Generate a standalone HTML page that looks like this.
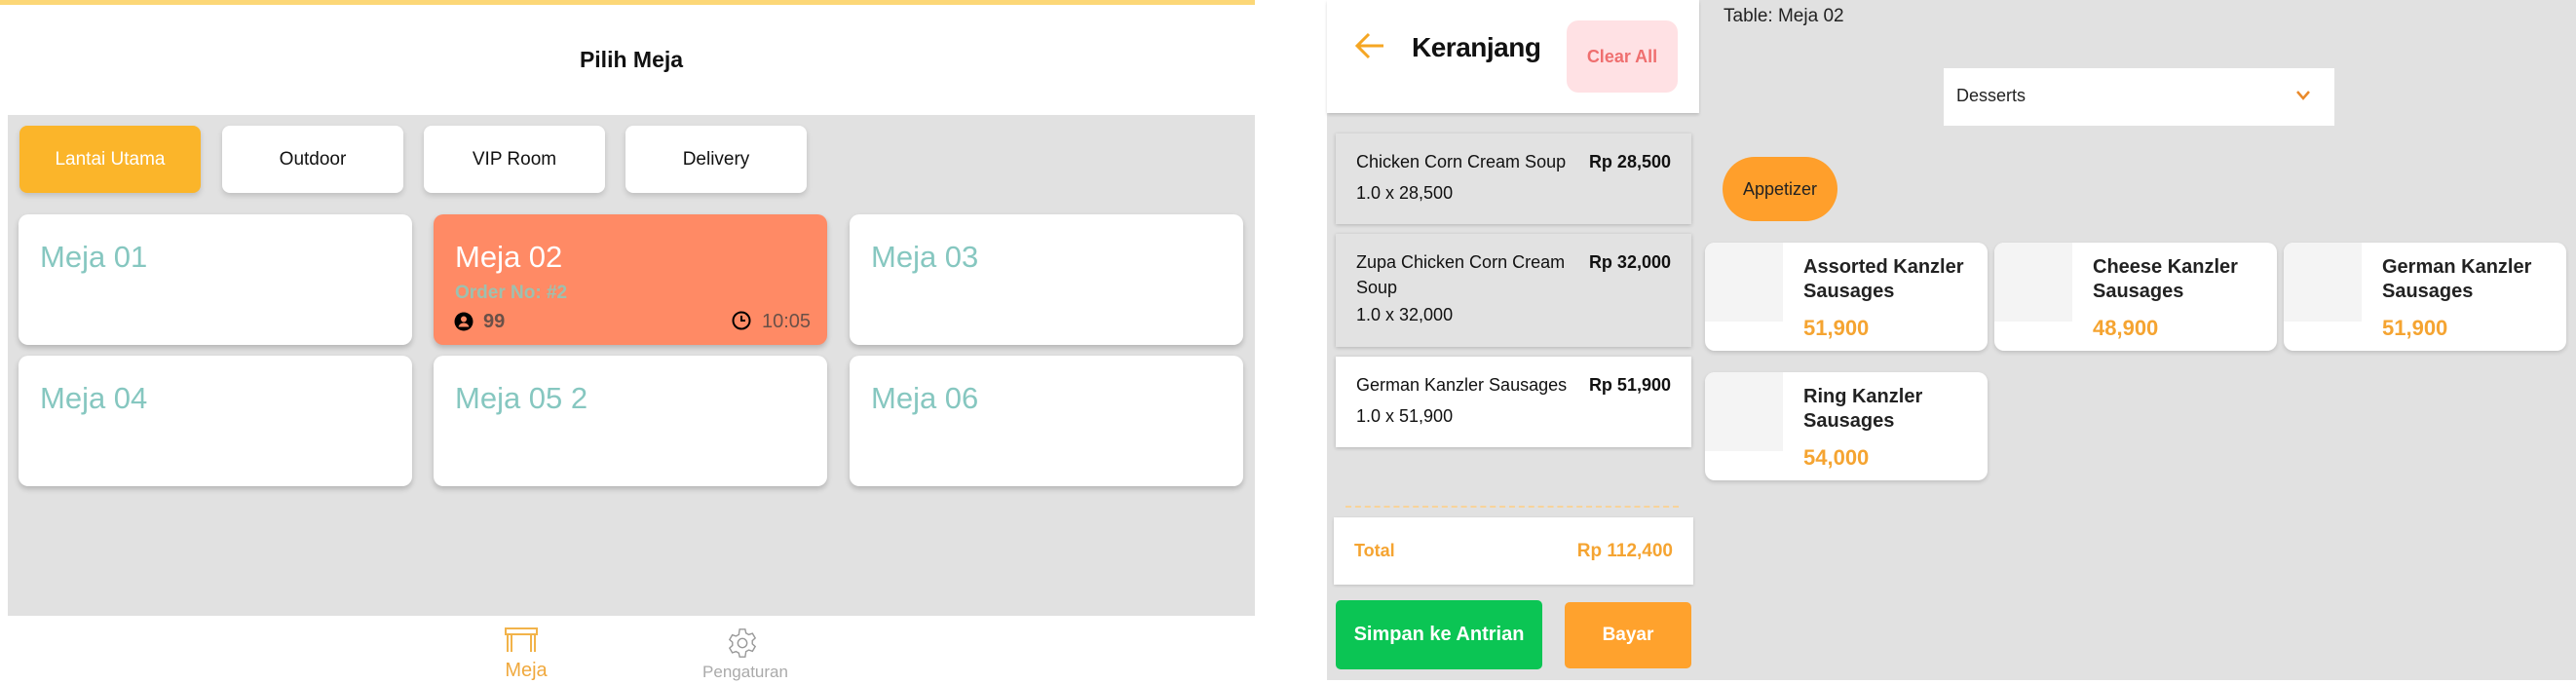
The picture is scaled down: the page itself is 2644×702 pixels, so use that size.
<!DOCTYPE html>
<html><head><meta charset="utf-8"><style>
*{margin:0;padding:0;box-sizing:border-box}
body{width:2644px;height:702px;position:relative;overflow:hidden;background:#fff;font-family:"Liberation Sans",sans-serif;}
.a{position:absolute}
.tab{position:absolute;top:129px;height:69px;background:#fff;border-radius:8px;box-shadow:0 3px 6px rgba(0,0,0,.15);font-size:19px;display:flex;align-items:center;justify-content:center;color:#111}
.card{position:absolute;width:404px;height:134px;background:#fff;border-radius:10px;box-shadow:0 3px 6px rgba(0,0,0,.2)}
.card .t{position:absolute;left:22px;top:26px;font-size:31px;color:#86c7c0}
.ci{position:absolute;left:1371px;width:365px;background:#e2e2e2;box-shadow:0 1px 4px rgba(0,0,0,.2);font-size:18px;color:#111}
.ci .n{position:absolute;left:21px;top:16px;line-height:26px}
.ci .p{position:absolute;right:21px;top:16px;line-height:26px;font-weight:bold}
.ci .q{position:absolute;left:21px}
.pc{position:absolute;width:290px;height:111px;background:#fff;border-radius:10px;box-shadow:0 2px 4px rgba(0,0,0,.15);overflow:hidden}
.pc .im{position:absolute;left:0;top:0;width:80px;height:81px;background:#f4f4f4}
.pc .nm{position:absolute;left:101px;top:13px;font-size:20px;line-height:25px;color:#222;font-weight:bold}
.pc .pr{position:absolute;left:101px;top:75px;font-size:22px;font-weight:bold;color:#f5a431}
</style></head><body>
<div class="a" style="left:0;top:0;width:1288px;height:5px;background:#fcd777"></div>
<div class="a" style="left:0;top:48px;width:1296px;text-align:center;font-size:23px;font-weight:bold;color:#111">Pilih Meja</div>
<div class="a" style="left:8px;top:118px;width:1280px;height:514px;background:#e1e1e1"></div>
<div class="tab" style="left:20px;width:186px;background:#fbb52a;color:#fff">Lantai Utama</div>
<div class="tab" style="left:228px;width:186px">Outdoor</div>
<div class="tab" style="left:435px;width:186px">VIP Room</div>
<div class="tab" style="left:642px;width:186px">Delivery</div>

<div class="card" style="left:19px;top:220px"><div class="t">Meja 01</div></div>
<div class="card" style="left:445px;top:220px;background:#ff8a65">
 <div class="t" style="left:22px;color:#fff">Meja 02</div>
 <div class="a" style="left:22px;top:70px;font-size:19px;font-weight:bold;color:#9cc1b0">Order No: #2</div>
 <svg class="a" style="left:21px;top:100px" width="20" height="20" viewBox="0 0 20 20"><circle cx="10" cy="10" r="9.5" fill="#000"/><circle cx="10" cy="7.5" r="3" fill="#ff8a65"/><path d="M4.5 15.5c1-3 3-4 5.5-4s4.5 1 5.5 4z" fill="#ff8a65"/></svg>
 <div class="a" style="left:51px;top:99px;font-size:20px;font-weight:bold;color:#6a5048">99</div>
 <svg class="a" style="left:306px;top:99px" width="20" height="20" viewBox="0 0 20 20"><circle cx="10" cy="10" r="8.5" fill="none" stroke="#000" stroke-width="2"/><path d="M10 5v5h4" fill="none" stroke="#000" stroke-width="2"/></svg>
 <div class="a" style="left:337px;top:99px;font-size:20px;color:#6a5048">10:05</div>
</div>
<div class="card" style="left:872px;top:220px"><div class="t">Meja 03</div></div>
<div class="card" style="left:19px;top:365px"><div class="t">Meja 04</div></div>
<div class="card" style="left:445px;top:365px"><div class="t">Meja 05 2</div></div>
<div class="card" style="left:872px;top:365px"><div class="t">Meja 06</div></div>

<svg class="a" style="left:518px;top:644px" width="34" height="26" viewBox="0 0 34 26"><rect x="1" y="1" width="32" height="6" fill="none" stroke="#f2b34a" stroke-width="2"/><path d="M3 7v18M7 7v18M27 7v18M31 7v18" stroke="#f2b34a" stroke-width="2"/></svg>
<div class="a" style="left:507px;top:677px;width:66px;text-align:center;font-size:20px;color:#f0a93e">Meja</div>
<svg class="a" style="left:745px;top:643px" width="34" height="34" viewBox="0 0 24 24"><path fill="none" stroke="#999" stroke-width="1" d="M10 2h4l.6 2.8 2 1.1 2.7-.9 2 3.4-2.1 1.9v2.3l2.1 1.9-2 3.4-2.7-.9-2 1.1L14 22h-4l-.6-2.8-2-1.1-2.7.9-2-3.4 2.1-1.9V11.4L2.7 9.5l2-3.4 2.7.9 2-1.1z"/><circle cx="12" cy="12" r="3.3" fill="none" stroke="#999" stroke-width="1"/></svg>
<div class="a" style="left:700px;top:680px;width:130px;text-align:center;font-size:17px;color:#aaa">Pengaturan</div>

<div class="a" style="left:1362px;top:0;width:1282px;height:698px;background:#e1e1e1"></div>
<div class="a" style="left:1362px;top:0;width:382px;height:116px;background:#fff;box-shadow:0 2px 3px rgba(0,0,0,.15)"></div>
<svg class="a" style="left:1390px;top:33px" width="32" height="28" viewBox="0 0 32 28"><path d="M30 14H4M15 2L3 14l12 12" fill="none" stroke="#f5a623" stroke-width="3"/></svg>
<div class="a" style="left:1449px;top:33px;font-size:28px;color:#111;font-weight:bold;letter-spacing:-0.5px">Keranjang</div>
<div class="a" style="left:1608px;top:21px;width:114px;height:74px;background:#ffe1e4;border-radius:12px;color:#ef6f6f;font-size:18px;font-weight:bold;display:flex;align-items:center;justify-content:center">Clear All</div>

<div class="ci" style="top:137px;height:93px"><div class="n">Chicken Corn Cream Soup</div><div class="p">Rp 28,500</div><div class="q" style="top:48px;line-height:26px">1.0 x 28,500</div></div>
<div class="ci" style="top:240px;height:116px"><div class="n">Zupa Chicken Corn Cream<br>Soup</div><div class="p">Rp 32,000</div><div class="q" style="top:70px;line-height:26px">1.0 x 32,000</div></div>
<div class="ci" style="top:366px;height:93px;background:#fff"><div class="n">German Kanzler Sausages</div><div class="p">Rp 51,900</div><div class="q" style="top:48px;line-height:26px">1.0 x 51,900</div></div>

<div class="a" style="left:1381px;top:519px;width:342px;border-top:2px dashed #f7d39a"></div>
<div class="a" style="left:1369px;top:531px;width:369px;height:69px;background:#fff;box-shadow:0 1px 3px rgba(0,0,0,.15)"></div>
<div class="a" style="left:1390px;top:555px;font-size:18px;color:#f5a431;font-weight:bold">Total</div>
<div class="a" style="left:1560px;width:157px;text-align:right;top:555px;font-size:19px;color:#f5a431;font-weight:bold">Rp 112,400</div>
<div class="a" style="left:1371px;top:616px;width:212px;height:71px;background:#0bc554;border-radius:5px;color:#fff;font-size:20px;font-weight:bold;display:flex;align-items:center;justify-content:center">Simpan ke Antrian</div>
<div class="a" style="left:1606px;top:618px;width:130px;height:68px;background:#ffa22d;border-radius:5px;color:#fff;font-size:19px;font-weight:bold;display:flex;align-items:center;justify-content:center">Bayar</div>

<div class="a" style="left:1769px;top:6px;font-size:19px;color:#222">Table: Meja 02</div>
<div class="a" style="left:1995px;top:70px;width:401px;height:59px;background:#fff"></div>
<div class="a" style="left:2008px;top:88px;font-size:18px;color:#222">Desserts</div>
<svg class="a" style="left:2356px;top:92px" width="16" height="12" viewBox="0 0 16 12"><path d="M2 2l6 7 6-7" fill="none" stroke="#e9892a" stroke-width="2.5"/></svg>
<div class="a" style="left:1768px;top:161px;width:118px;height:66px;background:#ff9f2b;border-radius:33px;color:#222;font-size:18px;display:flex;align-items:center;justify-content:center">Appetizer</div>

<div class="pc" style="left:1750px;top:249px"><div class="im"></div><div class="nm">Assorted Kanzler<br>Sausages</div><div class="pr">51,900</div></div>
<div class="pc" style="left:2047px;top:249px"><div class="im"></div><div class="nm">Cheese Kanzler<br>Sausages</div><div class="pr">48,900</div></div>
<div class="pc" style="left:2344px;top:249px"><div class="im"></div><div class="nm">German Kanzler<br>Sausages</div><div class="pr">51,900</div></div>
<div class="pc" style="left:1750px;top:382px"><div class="im"></div><div class="nm">Ring Kanzler<br>Sausages</div><div class="pr">54,000</div></div>
</body></html>
